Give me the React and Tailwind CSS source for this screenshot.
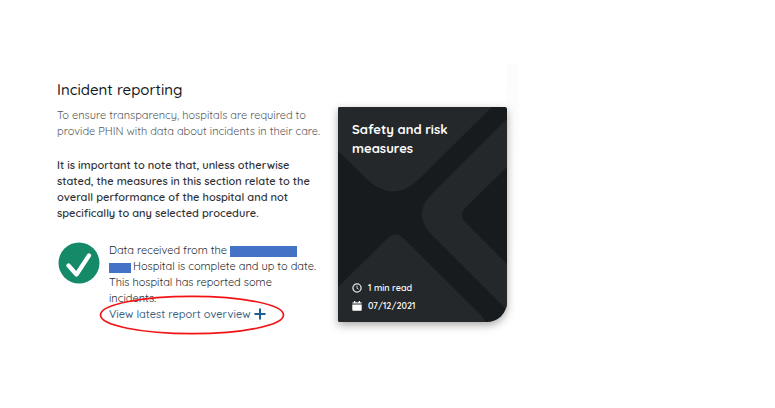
import clsx from 'clsx';

/* Solid bar that hides a name in running text */
function Redacted({ className }) {
  return <span aria-hidden="true" className={clsx('inline-block bg-[#4472c4]', className)} />;
}

function CheckBadge() {
  return (
    <svg viewBox="0 0 42 42" className="size-[42px] shrink-0" aria-hidden="true">
      <circle cx="21" cy="21" r="20.5" fill="#148a68" />
      <path
        d="M10.5 23.5 L18.5 32.5 L31 13.5"
        fill="none"
        stroke="#fff"
        strokeWidth="4.2"
        strokeLinecap="round"
        strokeLinejoin="round"
      />
    </svg>
  );
}

function PlusIcon() {
  return (
    <svg viewBox="0 0 12 12" className="size-3 shrink-0" aria-hidden="true">
      <path d="M6 1.2v9.6M1.2 6h9.6" stroke="#1c5f94" strokeWidth="2" strokeLinecap="round" />
    </svg>
  );
}

function ClockIcon() {
  return (
    <svg viewBox="0 0 10 10" className="size-[10px] shrink-0" aria-hidden="true">
      <circle cx="5" cy="5" r="4.1" fill="none" stroke="#e4e5e5" strokeWidth="1.3" />
      <path d="M5 2.6V5.2l1.6 1" fill="none" stroke="#e4e5e5" strokeWidth="0.9" />
    </svg>
  );
}

function CalendarIcon() {
  return (
    <svg viewBox="0 0 10 10" className="size-[10px] shrink-0" aria-hidden="true">
      <path d="M0.5 1h9v1.8h-9z" fill="#b9bcbd" />
      <path d="M2 0h1.3v2H2zM6.7 0H8v2H6.7z" fill="#fff" />
      <path d="M0.3 3.4h9.4V9a.8.8 0 0 1-.8.8H1.1A.8.8 0 0 1 .3 9z" fill="#fff" />
    </svg>
  );
}

/* Decorative background of the article card */
function CardPattern() {
  return (
    <svg
      viewBox="0 0 169 215"
      preserveAspectRatio="none"
      className="absolute inset-0 size-full"
      aria-hidden="true"
    >
      <rect width="169" height="215" fill="#171b1e" />
      <g fill="#24282b">
        <path d="M0 0H154L80 73Q56 95 32 75L0 44z" />
        <path d="M169 12V60L127 101Q121 108 127 115L169 157V203L91 125Q77 107 91 90z" />
        <path d="M0 180L51 130Q57 124 64 130L142 207L148 215H0z" />
      </g>
    </svg>
  );
}

function ArticleCard() {
  return (
    <article className="relative flex min-h-[215px] w-[169px] shrink-0 flex-col justify-between overflow-hidden rounded-xs rounded-br-[20px] px-[14px] pt-[13px] pb-[7px] text-white shadow-[0_3px_8px_rgba(0,0,0,0.35)]">
      <CardPattern />
      <h3 className="relative text-[13px] leading-[19px] font-bold">
        Safety and risk
        <br />
        measures
      </h3>
      <ul className="relative text-[9px] leading-[18px] font-semibold">
        <li className="flex items-center gap-[6px]">
          <ClockIcon />
          1 min read
        </li>
        <li className="flex items-center gap-[6px]">
          <CalendarIcon />
          07/12/2021
        </li>
      </ul>
    </article>
  );
}

function ReportStatus() {
  return (
    <div className="mt-[21px] flex gap-[9px] pl-px">
      <CheckBadge />
      <div className="whitespace-nowrap text-[#25282c]">
        <p>
          Data received from the <Redacted className="h-[11px] w-[67px] align-[-3px]" />
          <br />
          <Redacted className="mr-[2px] h-[10px] w-[22px] align-[-3px]" />
          Hospital is complete and up to date.
          <br />
          This hospital has reported some
          <br />
          incidents.
        </p>
        <a
          href="#overview"
          className="relative inline-flex items-center gap-[3px] font-medium text-[#3c6285]"
        >
          View latest report overview
          <PlusIcon />
          {/* Hand drawn highlight */}
          <svg
            viewBox="0 0 186 40"
            className="absolute -top-[11px] -left-[10px] h-10 w-[186px]"
            aria-hidden="true"
          >
            <ellipse cx="93" cy="20" rx="91.5" ry="18.7" fill="none" stroke="#f21414" strokeWidth="1.7" />
          </svg>
        </a>
      </div>
    </div>
  );
}

export default function App() {
  return (
    <main className="min-h-screen bg-white pt-16 font-['Quicksand','Lato',sans-serif]">
      <div className="flex w-fit pl-[57px]">
        <section className="w-[281px] pt-[14px] text-[11px] leading-4">
          <h2 className="text-[15px] leading-6 font-medium text-[#15181b]">Incident reporting</h2>
          <p className="mt-[5px] whitespace-nowrap text-[#54575b]">
            To ensure transparency, hospitals are required to
            <br />
            provide PHIN with data about incidents in their care.
          </p>
          <p className="mt-[18px] whitespace-nowrap font-semibold text-[#303338]">
            It is important to note that, unless otherwise
            <br />
            stated, the measures in this section relate to the
            <br />
            overall performance of the hospital and not
            <br />
            specifically to any selected procedure.
          </p>
          <ReportStatus />
        </section>
        <div className="pt-[43px]">
          <ArticleCard />
        </div>
        <div className="h-[200px] w-3 bg-linear-to-b from-[#fcfcfc] to-white" />
      </div>
    </main>
  );
}
